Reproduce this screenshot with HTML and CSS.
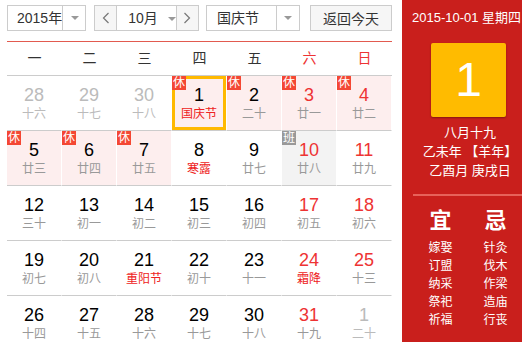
FILE: index.html
```html
<!DOCTYPE html>
<html lang="zh-CN">
<head>
  <meta charset="UTF-8" />
  <title>万年历</title>
  <link rel="stylesheet" href="styles.css">
</head>
<body>
  <div class="calendar">
    <div class="toolbar">
      <div class="select year-select">
        <span class="select-text">2015年</span>
        <span class="select-arrow"><i class="caret"></i></span>
      </div>
      <div class="month-group">
        <span class="step"><svg width="8" height="12" viewBox="0 0 8 12"><polyline points="6.5,1 1.5,6 6.5,11" fill="none" stroke="#777" stroke-width="1.2"/></svg></span>
        <span class="month-text">10月 <i class="caret"></i></span>
        <span class="step"><svg width="8" height="12" viewBox="0 0 8 12"><polyline points="1.5,1 6.5,6 1.5,11" fill="none" stroke="#777" stroke-width="1.2"/></svg></span>
      </div>
      <div class="select holiday-select">
        <span class="select-text">国庆节</span>
        <span class="select-arrow"><i class="caret"></i></span>
      </div>
      <button class="today-btn" type="button">返回今天</button>
    </div>

    <div class="week">
      <span>一</span><span>二</span><span>三</span><span>四</span><span>五</span>
      <span class="weekend">六</span><span class="weekend">日</span>
    </div>

    <div class="days">
      <div class="day other"><b class="num">28</b><span class="lunar">十六</span></div>
      <div class="day other"><b class="num">29</b><span class="lunar">十七</span></div>
      <div class="day other"><b class="num">30</b><span class="lunar">十八</span></div>
      <div class="day rest today"><span class="tag">休</span><b class="num">1</b><span class="lunar fest">国庆节</span></div>
      <div class="day rest"><span class="tag">休</span><b class="num">2</b><span class="lunar">二十</span></div>
      <div class="day rest weekend"><span class="tag">休</span><b class="num">3</b><span class="lunar">廿一</span></div>
      <div class="day rest weekend"><span class="tag">休</span><b class="num">4</b><span class="lunar">廿二</span></div>

      <div class="day rest"><span class="tag">休</span><b class="num">5</b><span class="lunar">廿三</span></div>
      <div class="day rest"><span class="tag">休</span><b class="num">6</b><span class="lunar">廿四</span></div>
      <div class="day rest"><span class="tag">休</span><b class="num">7</b><span class="lunar">廿五</span></div>
      <div class="day"><b class="num">8</b><span class="lunar fest">寒露</span></div>
      <div class="day"><b class="num">9</b><span class="lunar">廿七</span></div>
      <div class="day work weekend"><span class="tag">班</span><b class="num">10</b><span class="lunar">廿八</span></div>
      <div class="day weekend"><b class="num">11</b><span class="lunar">廿九</span></div>

      <div class="day"><b class="num">12</b><span class="lunar">三十</span></div>
      <div class="day"><b class="num">13</b><span class="lunar">初一</span></div>
      <div class="day"><b class="num">14</b><span class="lunar">初二</span></div>
      <div class="day"><b class="num">15</b><span class="lunar">初三</span></div>
      <div class="day"><b class="num">16</b><span class="lunar">初四</span></div>
      <div class="day weekend"><b class="num">17</b><span class="lunar">初五</span></div>
      <div class="day weekend"><b class="num">18</b><span class="lunar">初六</span></div>

      <div class="day"><b class="num">19</b><span class="lunar">初七</span></div>
      <div class="day"><b class="num">20</b><span class="lunar">初八</span></div>
      <div class="day"><b class="num">21</b><span class="lunar fest">重阳节</span></div>
      <div class="day"><b class="num">22</b><span class="lunar">初十</span></div>
      <div class="day"><b class="num">23</b><span class="lunar">十一</span></div>
      <div class="day weekend"><b class="num">24</b><span class="lunar fest">霜降</span></div>
      <div class="day weekend"><b class="num">25</b><span class="lunar">十三</span></div>

      <div class="day"><b class="num">26</b><span class="lunar">十四</span></div>
      <div class="day"><b class="num">27</b><span class="lunar">十五</span></div>
      <div class="day"><b class="num">28</b><span class="lunar">十六</span></div>
      <div class="day"><b class="num">29</b><span class="lunar">十七</span></div>
      <div class="day"><b class="num">30</b><span class="lunar">十八</span></div>
      <div class="day weekend"><b class="num">31</b><span class="lunar">十九</span></div>
      <div class="day other"><b class="num">1</b><span class="lunar">二十</span></div>
    </div>
  </div>

  <div class="panel">
    <div class="panel-date">2015-10-01 星期四</div>
    <div class="big-day">1</div>
    <div class="panel-lunar">
      <div>八月十九</div>
      <div>乙未年 【羊年】</div>
      <div>乙酉月 庚戌日</div>
    </div>
    <div class="yiji">
      <div class="yiji-col">
        <div class="yiji-title">宜</div>
        <div>嫁娶</div><div>订盟</div><div>纳采</div><div>祭祀</div><div>祈福</div>
      </div>
      <div class="yiji-col">
        <div class="yiji-title">忌</div>
        <div>针灸</div><div>伐木</div><div>作梁</div><div>造庙</div><div>行丧</div>
      </div>
    </div>
  </div>
</body>
</html>
```

FILE: styles.css
```css
* {
  box-sizing: border-box;
}
body {
  margin: 0;
  display: flex;
  overflow: hidden;
  background: #fff;
  font-family: "Liberation Sans", "Noto Sans CJK SC", sans-serif;
  color: #333;
}
.calendar {
  width: 385px;
  margin-left: 7px;
  flex-shrink: 0;
}

/* toolbar */
.toolbar {
  height: 41px;
  padding-top: 5px;
  display: flex;
  align-items: flex-start;
}
.select, .month-group {
  height: 26px;
  border: 1px solid #ccc;
  display: flex;
  font-size: 14px;
  line-height: 24px;
  white-space: nowrap;
}
.select-text {
  flex: 1;
  padding-left: 10px;
}
.select-arrow {
  border-left: 1px solid #ccc;
  display: flex;
  align-items: center;
  justify-content: center;
}
.caret {
  display: inline-block;
  width: 0;
  height: 0;
  border-left: 4px solid transparent;
  border-right: 4px solid transparent;
  border-top: 4px solid #999;
  vertical-align: middle;
}
.year-select {
  width: 79px;
}
.year-select .select-text {
  padding-left: 9px;
}
.year-select .select-arrow {
  width: 24px;
  flex-shrink: 0;
}
.month-group {
  width: 105px;
  margin-left: 8px;
}
.step {
  width: 22px;
  background: #f6f6f6;
  display: flex;
  align-items: center;
  justify-content: center;
}
.month-text {
  width: 61px;
  border-left: 1px solid #ccc;
  border-right: 1px solid #ccc;
  padding-left: 11px;
}
.month-text .caret {
  margin-left: 6px;
}
.holiday-select {
  width: 94px;
  margin-left: 7px;
}
.holiday-select .select-arrow {
  width: 23px;
}
.today-btn {
  width: 82px;
  height: 26px;
  margin-left: 10px;
  border: 1px solid #ccc;
  background: #f6f6f6;
  font-family: inherit;
  font-size: 14px;
  color: #333;
  padding: 0;
}

/* week header */
.week {
  display: grid;
  grid-template-columns: repeat(7, 55px);
  height: 35px;
  border-top: 1px solid #e25a4f;
  border-bottom: 1px solid #ccc;
  font-size: 14px;
  line-height: 33px;
  text-align: center;
}
.week .weekend {
  color: #e33;
}

/* days */
.days {
  display: grid;
  grid-template-columns: repeat(7, 55px);
}
.day {
  position: relative;
  height: 55px;
  border-bottom: 1px solid #ccc;
  border-right: 1px solid #fff;
  padding-top: 8px;
  text-align: center;
}
.num {
  display: block;
  font-weight: normal;
  font-size: 18px;
  line-height: 22px;
  color: #000;
}
.lunar {
  display: block;
  font-size: 12px;
  line-height: 16px;
  color: #999;
}
.lunar.fest {
  color: #e22;
}
.weekend .num {
  color: #e33;
}
.other .num, .other .lunar {
  color: #bbb;
}
.rest {
  background: #fdeeee;
}
.work {
  background: #f3f3f3;
}
.today {
  box-shadow: inset 0 0 0 3px #ffb900;
}
.tag {
  position: absolute;
  left: 0;
  top: 0;
  width: 14px;
  height: 14px;
  background: #f44733;
  color: #fff;
  font-size: 12px;
  line-height: 14px;
  text-align: center;
}
.work .tag {
  background: #999;
}

/* right panel */
.panel {
  width: 132px;
  flex-shrink: 0;
  margin-left: 10px;
  height: 342px;
  background: #c91f1c;
  color: #fff;
  text-align: center;
}
.panel-date {
  height: 36px;
  line-height: 36px;
  padding-left: 10px;
  text-align: left;
  font-size: 13px;
  white-space: nowrap;
}
.big-day {
  width: 75px;
  height: 74px;
  margin: 7px 0 0 29px;
  background: #ffbb00;
  border-radius: 2px;
  box-shadow: 0 1px 2px rgba(0, 0, 0, 0.35);
  font-size: 48px;
  line-height: 74px;
}
.panel-lunar {
  margin-top: 6px;
  font-size: 13px;
  line-height: 19px;
  padding-left: 4px;
  padding-bottom: 14px;
}
.yiji {
  margin: 0 11px;
  border-top: 2px solid #e7625a;
  padding-top: 9px;
  display: flex;
}
.yiji-col {
  width: 55px;
  font-size: 12px;
  line-height: 18px;
}
.yiji-title {
  font-size: 22px;
  font-weight: bold;
  line-height: 32px;
  margin-bottom: 2px;
}
```
